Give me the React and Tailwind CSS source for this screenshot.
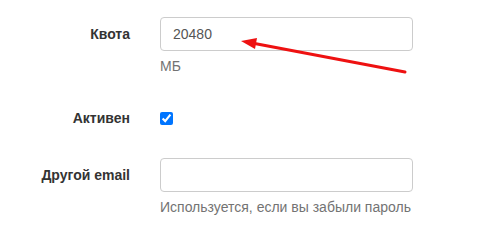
export default function App() {
  return (
    <div className="relative w-[484px] h-[235px] bg-white text-[14px] leading-[20px] text-[#333]" style={{ fontFamily: '"Liberation Sans", Arial, sans-serif' }}>
      <div className="pt-[17px]">
        <div className="flex">
          <label className="w-[145px] pr-[15px] pt-[7px] text-right font-bold">Квота</label>
          <div className="pl-[15px]">
            <input
              type="text"
              defaultValue="20480"
              className="w-[253px] h-[34px] px-[12px] py-[6px] border border-[#ccc] rounded-[4px] text-[#555] outline-none"
            />
            <div className="mt-[5px] text-[#737373]">МБ</div>
          </div>
        </div>

        <div className="flex mt-[25px]">
          <label className="w-[145px] pr-[15px] pt-[7px] text-right font-bold">Активен</label>
          <div className="pl-[15px] pt-[11px]">
            <input type="checkbox" checked readOnly className="block m-0 w-[13px] h-[13px] accent-[#0075ff]" />
          </div>
        </div>

        <div className="flex mt-[30px]">
          <label className="w-[145px] pr-[15px] pt-[7px] text-right font-bold">Другой email</label>
          <div className="pl-[15px]">
            <input
              type="text"
              className="w-[253px] h-[34px] px-[12px] py-[6px] border border-[#ccc] rounded-[4px] text-[#555] outline-none"
            />
            <div className="mt-[5px] text-[#737373]">Используется, если вы забыли пароль</div>
          </div>
        </div>
      </div>

      <svg className="absolute left-0 top-0 pointer-events-none" width="484" height="235">
        <line x1="252" y1="43" x2="405" y2="72" stroke="#ee1111" strokeWidth="3" strokeLinecap="round" />
        <polygon points="241,41 255,49 257,38" fill="#ee1111" />
      </svg>
    </div>
  );
}
